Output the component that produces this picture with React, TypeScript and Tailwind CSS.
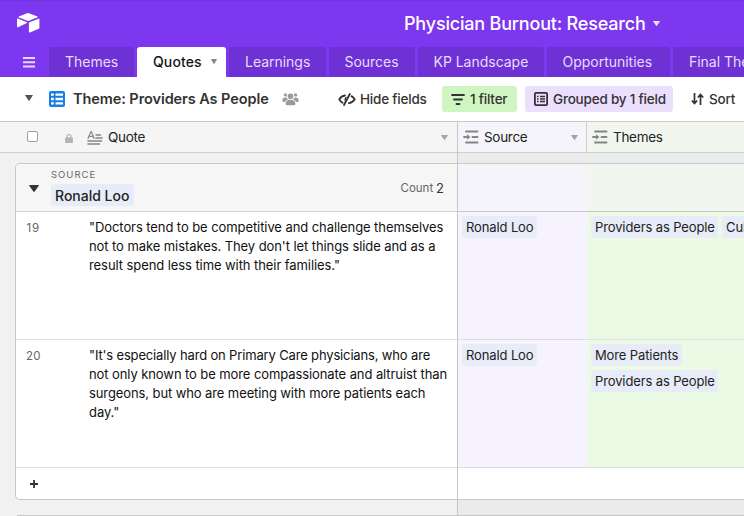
import React from "react";

function Caret({ className = "", w = 8, h = 6 }: { className?: string; w?: number; h?: number }) {
  return (
    <svg width={w} height={h} viewBox="0 0 8 6" preserveAspectRatio="none" className={`shrink-0 ${className}`}>
      <path d="M0.6 0h6.8q.7 0 .4.6L4.5 5.6q-.5.6-1 0L.2.6Q-.1 0 .6 0z" fill="currentColor" />
    </svg>
  );
}

function Logo() {
  return (
    <svg width="24" height="21" viewBox="0 0 24 21" fill="white">
      <path d="M11.200 1.200q.8-.3 1.600 0l8.700 3.300q.8.400 0 .8L13 8.800q-.9.300-1.800 0L2.700 5.300q-.8-.4 0-.8z" />
      <path d="M1 7.100q0-.8.900-.5l9 3.600q.6.300 0 .7L2 15.200q-1 .4-1-.4z" />
      <path d="M12.900 11.100q0-.6.600-.9l9.100-3.500q.8-.2.800.6v8.600q0 .6-.6.900l-9 3.700q-.9.300-.9-.6z" />
    </svg>
  );
}

function LinkIcon() {
  return (
    <svg width="16" height="14" viewBox="0 0 16 14" className="shrink-0 text-[#858585]" fill="none" stroke="currentColor" strokeWidth="1.8" strokeLinecap="round">
      <path d="M3 1.500h11.500M9.500 7h5M3 12.500h11.500" />
      <path d="M1 7h4" />
      <path d="M4 4.300v5.400L7.400 7z" fill="currentColor" stroke="none" />
    </svg>
  );
}

function Tab({ label, className }: { label: string; className: string }) {
  return (
    <div className={`h-[30px] shrink-0 rounded-t-[3px] bg-[#6e31d4] pl-4 text-[14px] leading-[30px] tracking-[-0.02px] text-[#e9dcff] ${className}`}>{label}</div>
  );
}

function Chip({ label, className = "" }: { label: string; className?: string }) {
  return (
    <span className={`h-[22px] shrink-0 rounded-[3px] bg-[#e7ecf8] pl-1 text-[13px] leading-[22px] tracking-[-0.12px] text-[#222] ${className}`}>{label}</span>
  );
}

function Lines({ lines }: { lines: { t: string; c: string }[] }) {
  return (
    <div className="pt-[6px] text-[13px] leading-[19px] text-[#111]">
      {lines.map((l) => (
        <div key={l.t} className={l.c}>{l.t}</div>
      ))}
    </div>
  );
}

function TopBar() {
  return (
    <header className="h-[77px] bg-[#7c37ef] shadow-[inset_0_1px_0_#7334dc]">
      <div className="flex h-[47px] items-start">
        <div className="ml-[16px] mt-[12px]"><Logo /></div>
        <div className="ml-[364px] mt-[11px] w-[242px] text-[18px] font-medium leading-[25px] tracking-[-0.19px] text-white">Physician Burnout: Research</div>
        <Caret w={7} h={5} className="ml-[7px] mt-[21px] text-[#eadfff]" />
      </div>
      <nav className="flex h-[30px] gap-[3px]">
        <div className="flex w-[46px] shrink-0 items-start pl-[23px] pt-[10px]">
          <svg width="12" height="11" viewBox="0 0 12 11" fill="#e5d9fc"><path d="M0 0h12v2H0zM0 4.300h12v2H0zM0 8.600h12v2H0z" /></svg>
        </div>
        <Tab label="Themes" className="w-[85px]" />
        <div className="flex h-[30px] w-[89px] shrink-0 items-center rounded-t-[3px] bg-white pl-4 text-[14px] font-medium leading-[30px] text-[#151515]">
          <span className="w-[58px] tracking-[0.1px]">Quotes</span>
          <Caret w={6} h={5} className="-mt-[2px] text-[#888]" />
        </div>
        <Tab label="Learnings" className="w-[96.5px]" />
        <Tab label="Sources" className="w-[86px]" />
        <Tab label="KP Landscape" className="w-[126px]" />
        <Tab label="Opportunities" className="w-[123.5px]" />
        <Tab label="Final Themes" className="w-[120px]" />
      </nav>
    </header>
  );
}

function Toolbar() {
  return (
    <div className="flex h-[44px] items-center bg-white text-[13.5px] font-medium tracking-[-0.2px] text-[#333]">
      <Caret w={8} h={6} className="ml-[25px] -mt-[3px] text-[#555]" />
      <svg width="16" height="16" viewBox="0 0 16 16" className="ml-[16px]">
        <rect width="16" height="16" rx="2" fill="#167ee6" />
        <path d="M2 2.400h2.800v2.400H2zM6.500 2.400h7.500v2.400H6.500zM2 6.800h2.800v2.400H2zM6.500 6.800h7.500v2.400H6.500zM2 11.200h2.800v2.400H2zM6.500 11.200h7.500v2.400H6.500z" fill="white" />
      </svg>
      <div className="ml-[8px] w-[194px] shrink-0 text-[14.5px] font-semibold tracking-[-0.08px]">Theme: Providers As People</div>
      <svg width="17" height="14" viewBox="0 0 17 14" className="ml-[15px] shrink-0" fill="#9b9b9b">
        <circle cx="8.500" cy="4.300" r="2.800" />
        <path d="M3.700 12.300v-.8q0-3.700 4.800-3.700t4.800 3.700v.8q0 1-1 1H4.700q-1 0-1-1z" />
        <circle cx="3.400" cy="2.900" r="1.700" /><circle cx="13.600" cy="2.900" r="1.700" />
        <path d="M.4 8.500V8q0-2.500 3-2.500 1.200 0 1.800.6.300 1 .8 1.500Q3.400 8.300 3 9.900H1.400q-1 0-1-1.400zM16.600 8.500V8q0-2.500-3-2.500-1.200 0-1.800.6-.3 1-.8 1.500 2.600.7 3 2.300h1.600q1 0 1-1.400z" />
      </svg>
      <svg width="18" height="13" viewBox="0 0 18 13" className="ml-[39px] shrink-0" fill="none" stroke="#333" strokeWidth="1.800" strokeLinecap="round">
        <path d="M7 2.500Q3.300 3 1.300 6.300 2.300 8.500 4.500 9.700M13.500 3.100q2.100 1.100 3.200 3.200-1.700 3.100-5.700 3.900M11.800 1 6 12" /><path d="M8 4.500Q6.600 6 7.200 7.500" strokeWidth="1.300" />
      </svg>
      <span className="ml-[4px] w-[66px] shrink-0">Hide fields</span>
      <div className="ml-[16px] flex h-[26px] w-[75px] shrink-0 items-center rounded-[3px] bg-[#cff5c1] pl-[9px]">
        <svg width="14" height="11" viewBox="0 0 14 11" className="shrink-0" stroke="#333" strokeWidth="1.800" strokeLinecap="round"><path d="M1 1h12M3 5.500h8M5.500 10h3" /></svg>
        <span className="ml-[5px]">1 filter</span>
      </div>
      <div className="ml-[8px] flex h-[26px] w-[148px] shrink-0 items-center rounded-[3px] bg-[#ebdffd] pl-[9px]">
        <svg width="14" height="14" viewBox="0 0 14 14" className="shrink-0" fill="none" stroke="#333">
          <rect x=".9" y=".9" width="12.200" height="12.200" rx="1" strokeWidth="1.800" />
          <path d="M3 4.500h1.500M6 4.500h5M3 7h1.500M6 7h5M3 9.500h1.500M6 9.500h5" strokeWidth="1.300" />
        </svg>
        <span className="ml-[5px]">Grouped by 1 field</span>
      </div>
      <svg width="13" height="12" viewBox="0 0 13 12" className="ml-[18px] shrink-0" fill="none" stroke="#333" strokeWidth="1.700">
        <path d="M3.500 0v10M.8 7.500l2.700 3 2.700-3M9.500 12V2M6.800 4.500l2.700-3 2.700 3" />
      </svg>
      <span className="ml-[5px]">Sort</span>
    </div>
  );
}

function QuoteColumn() {
  return (
    <div className="flex w-[458px] shrink-0 flex-col border-r border-[#c6c6c6] bg-[#f1f1f1]">
      <div className="flex h-[31px] items-center border-b border-[#cfcfcf] bg-[#f5f5f5] text-[13.5px] tracking-[-0.3px] text-[#222]">
        <div className="-mt-[1px] ml-[27px] size-[11px] shrink-0 rounded-[2px] border border-[#93a1b0] bg-white" />
        <svg width="8" height="9" viewBox="0 0 8 9" className="ml-[27px] mt-[2px] shrink-0"><rect y="3.500" width="8" height="5.500" rx="1" fill="#b5b5b5" /><path d="M2 4V2.500a2 2 0 0 1 4 0V4" fill="none" stroke="#b5b5b5" strokeWidth="1.200" /></svg>
        <svg width="16" height="14" viewBox="0 0 16 14" className="ml-[14px] mt-[1px] shrink-0" fill="none" stroke="#858585" strokeWidth="1.600" strokeLinecap="round"><path d="M1 7.500 3.800.8h.6L7.200 7.500M2 5.300h4.200" strokeWidth="1.200" /><path d="M9 4h4.500M9 7h6M1 10h13.500M1 13h11.500" /></svg>
        <span className="ml-[5px] w-[333px] shrink-0">Quote</span>
        <Caret w={7} h={5} className="mt-[1px] text-[#a5a5a5]" />
      </div>
      <div className="mt-[10px] ml-[15px] h-[337px] rounded-l-[5px] border border-r-0 border-[#c8c8c8] bg-white">
        <div className="flex h-[48px] rounded-tl-[4px] border-b border-[#d2d2d2] bg-[#f6f6f6]">
          <Caret w={10} h={7} className="ml-[12.5px] mt-[21px] text-[#333]" />
          <div className="ml-[12.5px] w-[82px] shrink-0">
            <div className="mt-[5px] h-[11px] text-[9.500px] leading-[12px] tracking-[1px] text-[#666]">SOURCE</div>
            <div className="mt-[4px] h-[22px] w-[83px] rounded-[3px] bg-[#e7ecf8] pl-1 text-[14px] font-medium leading-[23px] text-[#222]">Ronald Loo</div>
          </div>
          <span className="ml-[267.5px] mt-[16px] w-[35.5px] text-[11.500px] leading-[16px] text-[#666]">Count</span>
          <span className="mt-[16px] text-[13px] leading-[17px] text-[#333]">2</span>
        </div>
        <div className="flex h-[128px] border-b border-[#dedede]">
          <span className="w-[73px] shrink-0 pl-[10.5px] pt-[8px] text-[11.500px] leading-[17px] tracking-[.7px] text-[#666]">19</span>
          <Lines lines={[
            { t: "\"Doctors tend to be competitive and challenge themselves", c: "tracking-[-0.08px]" },
            { t: "not to make mistakes. They don't let things slide and as a", c: "tracking-[-0.08px]" },
            { t: "result spend less time with their families.\"", c: "tracking-[-0.08px]" },
          ]} />
        </div>
        <div className="flex h-[128px] border-b border-[#dedede]">
          <span className="w-[73px] shrink-0 pl-[10px] pt-[8px] text-[11.500px] leading-[17px] tracking-[.3px] text-[#666]">20</span>
          <Lines lines={[
            { t: "\"It's especially hard on Primary Care physicians, who are", c: "tracking-[-0.155px]" },
            { t: "not only known to be more compassionate and altruist than", c: "tracking-[-0.09px]" },
            { t: "surgeons, but who are meeting with more patients each", c: "tracking-[-0.1px]" },
            { t: "day.\"", c: "tracking-[-0.08px]" },
          ]} />
        </div>
        <div className="pl-[14px] pt-[12px]"><svg width="8" height="8" viewBox="0 0 8 8" stroke="#333" strokeWidth="1.800"><path d="M4 0v8M0 4h8" /></svg></div>
      </div>
      <div className="ml-[17px] mt-[15px] h-px bg-[#c8c8c8]" />
    </div>
  );
}

function SourceColumn() {
  return (
    <div className="w-[129px] shrink-0 bg-[#ebebeb] text-[13.5px] tracking-[-0.3px] text-[#222]">
      <div className="flex h-[31px] items-center border-b border-r border-[#cfcfcf] bg-[#f5f4fa] pl-[5px]">
        <LinkIcon /><span className="ml-[5px] w-[86.5px] shrink-0">Source</span><Caret w={7} h={5} className="mt-[1px] text-[#a5a5a5]" />
      </div>
      <div className="mt-[10px] h-[49px] border-y border-[#c8c8c8] bg-[#f5f4fa]" />
      <div className="flex h-[128px] border-b border-[#dedede] bg-[#f6f2fe] pl-[4px] pt-[4px]"><Chip label="Ronald Loo" className="w-[75px]" /></div>
      <div className="flex h-[128px] border-b border-[#dedede] bg-[#f6f2fe] pl-[4px] pt-[4px]"><Chip label="Ronald Loo" className="w-[75px]" /></div>
      <div className="h-[32px] border-b border-[#c8c8c8] bg-white" />
      <div className="mt-[15px] h-px bg-[#c8c8c8]" />
    </div>
  );
}

function ThemesColumn() {
  return (
    <div className="min-w-0 flex-1 overflow-hidden bg-[#ebebeb] text-[13.5px] tracking-[-0.3px] text-[#222]">
      <div className="flex h-[31px] items-center border-b border-[#cfcfcf] bg-[#f1f6ee] pl-[5px]"><LinkIcon /><span className="ml-[5px]">Themes</span></div>
      <div className="mt-[10px] h-[49px] border-y border-[#c8c8c8] bg-[#f1f6ee]" />
      <div className="flex h-[128px] gap-[4px] border-b border-[#dedede] bg-[#eafae4] pl-[4px] pt-[4px]">
        <Chip label="Providers as People" className="w-[127px]" /><Chip label="Culture" className="w-[60px]" />
      </div>
      <div className="flex h-[128px] flex-col gap-[4px] border-b border-[#dedede] bg-[#eafae4] pl-[4px] pt-[4px]">
        <Chip label="More Patients" className="w-[91px]" /><Chip label="Providers as People" className="w-[127px]" />
      </div>
      <div className="h-[32px] border-b border-[#c8c8c8] bg-white" />
      <div className="mt-[15px] h-px bg-[#c8c8c8]" />
    </div>
  );
}

export default function App() {
  return (
    <div className="h-[516px] w-[744px] overflow-hidden whitespace-nowrap bg-white font-['Inter','Liberation_Sans',sans-serif] antialiased">
      <TopBar />
      <Toolbar />
      <main className="flex h-[395px] border-t border-[#cacaca]">
        <QuoteColumn />
        <SourceColumn />
        <ThemesColumn />
      </main>
    </div>
  );
}
